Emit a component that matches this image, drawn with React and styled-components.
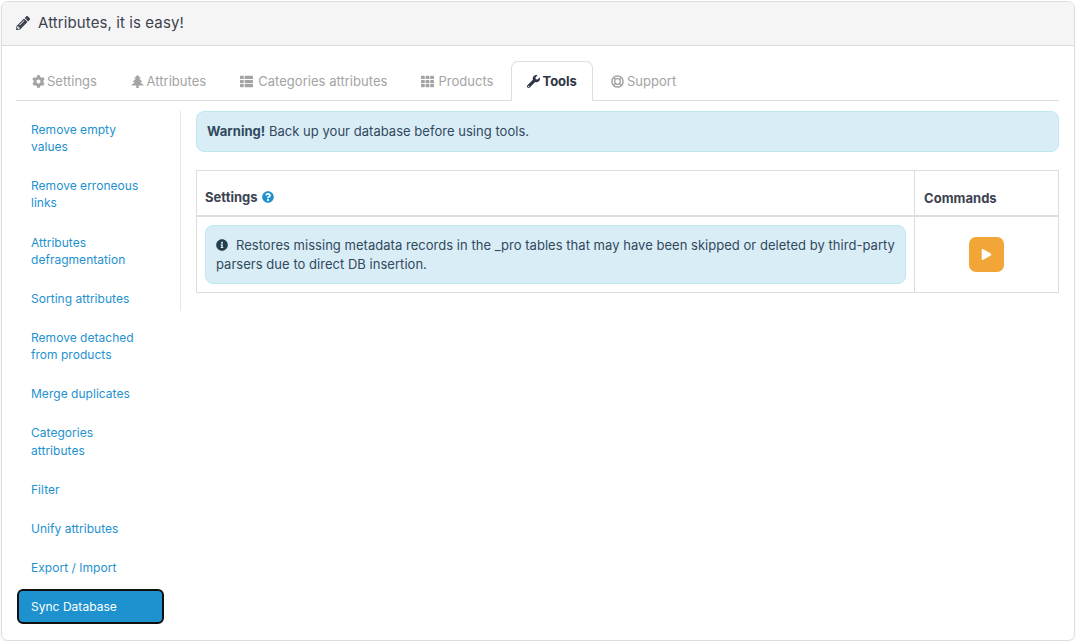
import styled, { createGlobalStyle } from 'styled-components'
import { FaPencilAlt, FaCog, FaThList, FaTh, FaWrench, FaQuestionCircle, FaInfoCircle, FaPlay } from 'react-icons/fa'

const GlobalStyle = createGlobalStyle`
html, body {
    margin: 0;
    padding: 0;
    background: #FFFFFF;
}
body {
    font-family: 'Inter', 'Liberation Sans', sans-serif;
    font-size: 13px;
    line-height: 18.5px;
    letter-spacing: 0.03px;
    color: #3C4250;
}
* {
    box-sizing: border-box;
}
`

const TreeIcon = () => (
    <svg viewBox="0 0 14 16" preserveAspectRatio="none" fill="currentColor">
        <path d="M7 0 L10.8 4.4 H8.6 L12.4 8.6 H9.8 L14 13 H8.3 V16 H5.7 V13 H0 L4.2 8.6 H1.6 L5.4 4.4 H3.2 Z" />
    </svg>
)

const RingIcon = () => (
    <svg viewBox="0 0 14 14" fill="none" stroke="currentColor">
        <circle cx="7" cy="7" r="6" strokeWidth="1.6" />
        <circle cx="7" cy="7" r="3" strokeWidth="1.4" />
        <path d="M2.8 2.8 L4.9 4.9 M11.2 2.8 L9.1 4.9 M2.8 11.2 L4.9 9.1 M11.2 11.2 L9.1 9.1" strokeWidth="1.4" />
    </svg>
)

const tabs = [
    { label: 'Settings', icon: <FaCog />, gap: 2 },
    { label: 'Attributes', icon: <TreeIcon />, gap: 2.5 },
    { label: 'Categories attributes', icon: <FaThList />, gap: 5 },
    { label: 'Products', icon: <FaTh />, gap: 4 },
    { label: 'Tools', icon: <FaWrench />, gap: 2, active: true },
    { label: 'Support', icon: <RingIcon />, gap: 3 },
]

const links = [
    'Remove empty values',
    'Remove erroneous links',
    'Attributes defragmentation',
    'Sorting attributes',
    'Remove detached from products',
    'Merge duplicates',
    'Categories attributes',
    'Filter',
    'Unify attributes',
    'Export / Import',
    'Sync Database',
]

export default function App() {
    return (
        <>
            <GlobalStyle />
            <Panel>
                <PanelHeader>
                    <FaPencilAlt />
                    <span>Attributes, it is easy!</span>
                </PanelHeader>
                <PanelBody>
                    <Tabs>
                        {tabs.map((tab) => (
                            <Tab key={tab.label} $active={tab.active} $gap={tab.gap}>
                                {tab.icon}
                                {tab.label}
                            </Tab>
                        ))}
                    </Tabs>
                    <Columns>
                        <Sidebar>
                            {links.map((link) => (
                                <SideLink key={link} $active={link === 'Sync Database'}>{link}</SideLink>
                            ))}
                        </Sidebar>
                        <Content>
                            <Alert>
                                <strong>Warning!</strong> Back up your database before using tools.
                            </Alert>
                            <ToolTable>
                                <thead>
                                    <tr>
                                        <HeadCell>
                                            Settings <HelpIcon><FaQuestionCircle /></HelpIcon>
                                        </HeadCell>
                                        <HeadCell $narrow>Commands</HeadCell>
                                    </tr>
                                </thead>
                                <tbody>
                                    <tr>
                                        <Cell>
                                            <InfoAlert>
                                                <InfoIcon><FaInfoCircle /></InfoIcon>
                                                Restores missing metadata records in the _pro tables that may have been skipped or deleted by third-party parsers due to direct DB insertion.
                                            </InfoAlert>
                                        </Cell>
                                        <CommandCell>
                                            <PlayButton><FaPlay /></PlayButton>
                                        </CommandCell>
                                    </tr>
                                </tbody>
                            </ToolTable>
                        </Content>
                    </Columns>
                </PanelBody>
            </Panel>
        </>
    );
}

const Panel = styled.div`
margin: 1px 1px 0 1px;
height: 640px;
border: 1px solid #DDDDDD;
border-radius: 7px;
box-shadow: 0 1px 2px rgba(0, 0, 0, 0.08);
overflow: hidden;
`
const PanelHeader = styled.div`
height: 44px;
padding: 0 14px 1px;
display: flex;
align-items: center;
gap: 8px;
background: #F5F5F5;
border-bottom: 1px solid #DDDDDD;
font-size: 15px;
letter-spacing: 0.1px;
color: #3C4250;
svg {
    width: 14px;
    height: 14px;
}
`
const PanelBody = styled.div`
padding: 15px 15px 0 14px;
`
const Tabs = styled.div`
display: flex;
height: 40px;
gap: 2px;
border-bottom: 1px solid #DDDDDD;
`
const Tab = styled.div`
height: 40px;
padding: 0 15px;
display: flex;
align-items: center;
gap: ${(props) => props.$gap}px;
font-size: 13px;
letter-spacing: ${(props) => (props.$active ? '0' : '0.03px')};
font-weight: ${(props) => (props.$active ? 700 : 400)};
color: ${(props) => (props.$active ? '#2F3542' : '#A3A3A3')};
background: ${(props) => (props.$active ? '#FFFFFF' : 'transparent')};
border: 1px solid ${(props) => (props.$active ? '#DDDDDD' : 'transparent')};
border-bottom: ${(props) => (props.$active ? '1px solid #FFFFFF' : 'none')};
border-radius: 7px 7px 0 0;
svg {
    width: 13px;
    height: 13px;
}
`
const Columns = styled.div`
display: flex;
margin-top: 10px;
`
const Sidebar = styled.div`
position: relative;
width: 165px;
flex-shrink: 0;
padding: 1px 17px 0 1px;
&::after {
    content: '';
    position: absolute;
    top: 0;
    right: 0;
    width: 1px;
    height: 200px;
    background: #E6E6E6;
}
`
const SideLink = styled.div`
padding: 7px 14px 7px 12px;
margin-bottom: 4px;
font-size: 12px;
line-height: 17.14px;
border: 2px solid ${(props) => (props.$active ? '#101010' : 'transparent')};
border-radius: 6px;
color: ${(props) => (props.$active ? '#FFFFFF' : '#1E91CF')};
background: ${(props) => (props.$active ? '#1E91CF' : 'transparent')};
`
const Content = styled.div`
flex: 1;
padding-left: 15px;
`
const Alert = styled.div`
height: 41px;
padding: 0 10px;
display: flex;
align-items: center;
white-space: pre;
background: #D9EDF7;
border: 1px solid #BCE8F1;
border-radius: 8px;
color: #31495C;
strong {
    font-weight: 700;
}
`
const ToolTable = styled.table`
width: 100%;
margin-top: 18px;
border-collapse: collapse;
table-layout: fixed;
`
const HeadCell = styled.th`
width: ${(props) => (props.$narrow ? '144px' : 'auto')};
height: 44px;
padding: 17px 8px 7px ${(props) => (props.$narrow ? '9px' : '8px')};
text-align: left;
vertical-align: bottom;
font-weight: 700;
color: #3C4250;
border: 1px solid #DDDDDD;
border-bottom: 2px solid #DDDDDD;
`
const HelpIcon = styled.span`
color: #1E91CF;
margin-left: 1px;
vertical-align: -1px;
svg {
    width: 12px;
    height: 12px;
}
`
const Cell = styled.td`
padding: 8px;
border: 1px solid #DDDDDD;
`
const CommandCell = styled(Cell)`
text-align: center;
vertical-align: middle;
`
const InfoAlert = styled.div`
padding: 10px 10px 9px;
background: #D9EDF7;
border: 1px solid #BCE8F1;
border-radius: 8px;
color: #31495C;
`
const InfoIcon = styled.span`
color: #23404F;
margin-right: 8px;
vertical-align: -1px;
svg {
    width: 12px;
    height: 12px;
}
`
const PlayButton = styled.div`
width: 35px;
height: 35px;
margin: 0 auto;
display: flex;
align-items: center;
justify-content: center;
background: #F3A638;
border-radius: 7px;
color: #FFFFFF;
svg {
    width: 11px;
    height: 11px;
}
`
